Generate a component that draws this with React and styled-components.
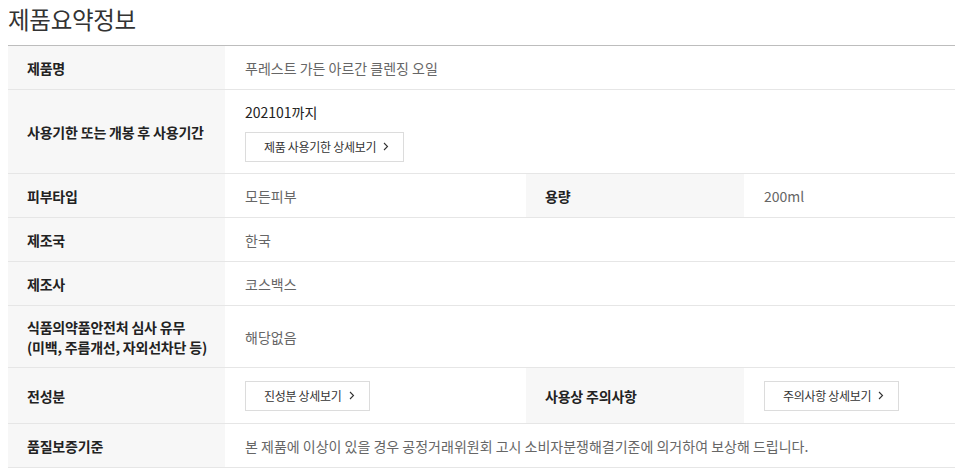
import React from 'react';
import styled, { createGlobalStyle } from 'styled-components';

const GlobalStyle = createGlobalStyle`
  html, body {
    margin: 0;
    padding: 0;
    background: #fff;
  }
  body {
    font-family: 'Noto Sans CJK KR', 'Noto Sans', sans-serif;
    color: #222;
  }
`;

const Page = styled.div`
  padding: 0 0 0 8px;
  width: 955px;
  box-sizing: border-box;
`;

const Title = styled.h2`
  margin: 0;
  height: 45px;
  font-size: 23.5px;
  font-weight: 400;
  color: #333;
  line-height: 38px;
  letter-spacing: -0.3px;
`;

const Table = styled.div`
  display: grid;
  grid-template-columns: 217px 301px 218px 1fr;
  border-top: 1px solid #bdbdbd;
`;

const Head = styled.div`
  display: flex;
  align-items: center;
  min-height: ${(p) => p.$h || 43}px;
  padding: 0 2px 0 19px;
  background: #f7f7f7;
  border-bottom: 1px solid #e6e6e6;
  font-size: 14px;
  font-weight: 700;
  color: #222;
  line-height: 20px;
  letter-spacing: -0.2px;
  white-space: nowrap;
`;

const Cell = styled.div`
  display: flex;
  flex-direction: ${(p) => (p.$stack ? 'column' : 'row')};
  align-items: ${(p) => (p.$stack ? 'flex-start' : 'center')};
  justify-content: ${(p) => (p.$stack ? 'center' : 'flex-start')};
  gap: 10px;
  padding: 0 20px;
  border-bottom: 1px solid #e6e6e6;
  grid-column: ${(p) => (p.$wide ? 'span 3' : 'auto')};
  font-size: 14px;
  color: #666;
`;

const Strong = styled.span`
  font-size: 14px;
  color: #222;
  line-height: 20px;
`;

const MoreButton = styled.button`
  display: inline-flex;
  align-items: center;
  gap: 7px;
  height: 30px;
  padding: 0 14px 0 18px;
  background: #fff;
  border: 1px solid #dcdcdc;
  font-family: inherit;
  font-size: 12px;
  color: #333;
  letter-spacing: -0.3px;
  cursor: pointer;
`;

const Chevron = () => (
  <svg width="6" height="9" viewBox="0 0 6 9" fill="none">
    <path d="M1 1l3.5 3.5L1 8" stroke="#333" strokeWidth="1.1" />
  </svg>
);

function App() {
  return (
    <Page>
      <GlobalStyle />
      <Title>제품요약정보</Title>
      <Table>
        <Head>제품명</Head>
        <Cell $wide>푸레스트 가든 아르간 클렌징 오일</Cell>

        <Head $h={83}>사용기한 또는 개봉 후 사용기간</Head>
        <Cell $wide $stack>
          <Strong>202101까지</Strong>
          <MoreButton>
            제품 사용기한 상세보기 <Chevron />
          </MoreButton>
        </Cell>

        <Head>피부타입</Head>
        <Cell>모든피부</Cell>
        <Head>용량</Head>
        <Cell>200ml</Cell>

        <Head>제조국</Head>
        <Cell $wide>한국</Cell>

        <Head>제조사</Head>
        <Cell $wide>코스백스</Cell>

        <Head $h={61}>
          식품의약품안전처 심사 유무
          <br />
          (미백, 주름개선, 자외선차단 등)
        </Head>
        <Cell $wide>해당없음</Cell>

        <Head $h={55}>전성분</Head>
        <Cell>
          <MoreButton>
            진성분 상세보기 <Chevron />
          </MoreButton>
        </Cell>
        <Head>사용상 주의사항</Head>
        <Cell>
          <MoreButton>
            주의사항 상세보기 <Chevron />
          </MoreButton>
        </Cell>

        <Head>품질보증기준</Head>
        <Cell $wide>
          본 제품에 이상이 있을 경우 공정거래위원회 고시 소비자분쟁해결기준에 의거하여 보상해 드립니다.
        </Cell>
      </Table>
    </Page>
  );
}

export default App;
